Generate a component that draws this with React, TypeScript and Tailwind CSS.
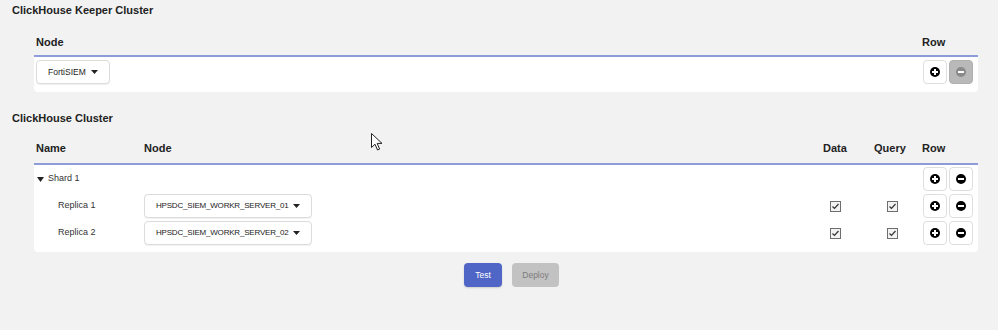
import React from "react";

const PlusIcon = ({ color = "#000" }: { color?: string }) => (
  <svg width="10" height="10" viewBox="0 0 10 10">
    <circle cx="5" cy="5" r="5" fill={color} />
    <rect x="4" y="2" width="2" height="6" fill="#fff" />
    <rect x="2" y="4" width="6" height="2" fill="#fff" />
  </svg>
);

const MinusIcon = ({ color = "#000" }: { color?: string }) => (
  <svg width="10" height="10" viewBox="0 0 10 10">
    <circle cx="5" cy="5" r="5" fill={color} />
    <rect x="2" y="4" width="6" height="2" fill="#fff" />
  </svg>
);

const Caret = () => (
  <svg width="7" height="4" viewBox="0 0 7 4">
    <path d="M0 0 L7 0 L3.5 4 Z" fill="#222" />
  </svg>
);

const Checkbox = () => (
  <div className="w-[11px] h-[11px] border border-[#6e6e6e] bg-[#f3f3f3] flex items-center justify-center">
    <svg width="9" height="9" viewBox="0 0 9 9">
      <path d="M1.5 4.5 L3.5 6.5 L7.5 2" stroke="#333" strokeWidth="1.2" fill="none" />
    </svg>
  </div>
);

const Dropdown = ({ label, w, text }: { label: string; w: string; text: string }) => (
  <div
    className={`${w} h-[24px] bg-white border border-[#dcdcdc] rounded-[4px] shadow-[0_1px_1px_rgba(0,0,0,0.06)] flex items-center justify-between pl-[11px] pr-[11px] text-[#222]`}
  >
    <span className={text}>{label}</span>
    <Caret />
  </div>
);

const RowButtons = ({ minusDisabled = false }: { minusDisabled?: boolean }) => (
  <div className="flex gap-[2px]">
    <div className="w-[24px] h-[24px] bg-white border border-[#dedede] rounded-[4px] flex items-center justify-center">
      <PlusIcon />
    </div>
    {minusDisabled ? (
      <div className="w-[24px] h-[24px] bg-[#b9b9b9] border border-[#b0b0b0] rounded-[4px] flex items-center justify-center">
        <MinusIcon color="#8a8a8a" />
      </div>
    ) : (
      <div className="w-[24px] h-[24px] bg-white border border-[#dedede] rounded-[4px] flex items-center justify-center">
        <MinusIcon />
      </div>
    )}
  </div>
);

export default function App() {
  return (
    <div
      className="relative w-[998px] h-[330px] bg-[#f2f2f2] overflow-hidden text-[#222]"
      style={{ fontFamily: '"Liberation Sans", Arial, sans-serif' }}
    >
      <div className="pt-[3px] pl-[12px] text-[11px] leading-[14px] font-bold text-[#222]">
        ClickHouse Keeper Cluster
      </div>

      <div className="ml-[34px] mr-[20px]">
        <div className="mt-[18px] h-[14px] grid grid-cols-[1fr_56px] text-[11px] leading-[14px] font-bold">
          <div className="pl-[2px]">Node</div>
          <div>Row</div>
        </div>
        <div className="mt-[6px] h-[2px] bg-[#8e9bd9]" />
        <div className="bg-white rounded-b-[4px] pt-[3px] pb-[8px] grid grid-cols-[1fr_56px] items-center">
          <div className="pl-[2px]">
            <Dropdown label="FortiSIEM" w="w-[74px]" text="text-[8.5px]" />
          </div>
          <div className="pl-[1px]">
            <RowButtons minusDisabled />
          </div>
        </div>
      </div>

      <div className="mt-[19px] pl-[12px] text-[11px] leading-[14px] font-bold text-[#222]">
        ClickHouse Cluster
      </div>

      <div className="ml-[34px] mr-[20px]">
        <div className="mt-[16px] h-[14px] grid grid-cols-[110px_679px_51px_48px_56px] text-[11px] leading-[14px] font-bold">
          <div className="pl-[2px]">Name</div>
          <div>Node</div>
          <div>Data</div>
          <div>Query</div>
          <div>Row</div>
        </div>
        <div className="mt-[8px] h-[2px] bg-[#8e9bd9]" />
        <div className="bg-white rounded-b-[4px] pt-[2px] pb-[7px] flex flex-col gap-[3px] text-[9px] text-[#333]">
          <div className="grid grid-cols-[110px_679px_51px_48px_56px] items-center h-[24px]">
            <div className="pl-[3px] flex items-center gap-[4px]">
              <svg width="7" height="5" viewBox="0 0 7 5">
                <path d="M0 0 L7 0 L3.5 5 Z" fill="#222" />
              </svg>
              <span>Shard 1</span>
            </div>
            <div />
            <div />
            <div />
            <div className="pl-[1px]">
              <RowButtons />
            </div>
          </div>
          {["01", "02"].map((n, i) => (
            <div key={n} className="grid grid-cols-[110px_679px_51px_48px_56px] items-center h-[24px]">
              <div className="pl-[24px]">Replica {i + 1}</div>
              <div>
                <Dropdown
                  label={`HPSDC_SIEM_WORKR_SERVER_${n}`}
                  w="w-[168px]"
                  text="text-[8px] tracking-[-0.2px]"
                />
              </div>
              <div className="pl-[7px]">
                <Checkbox />
              </div>
              <div className="pl-[13px]">
                <Checkbox />
              </div>
              <div className="pl-[1px]">
                <RowButtons />
              </div>
            </div>
          ))}
        </div>

        <div className="mt-[11px] flex gap-[10px] pl-[430px]">
          <div className="w-[38px] h-[24px] rounded-[4px] bg-[#4f66c6] text-white text-[8.5px] flex items-center justify-center shadow-[0_1px_2px_rgba(0,0,0,0.15)]">
            Test
          </div>
          <div className="w-[47px] h-[24px] rounded-[4px] bg-[#c2c2c2] text-[#7c7c7c] text-[8.5px] flex items-center justify-center">
            Deploy
          </div>
        </div>
      </div>

      <svg className="absolute left-[371px] top-[133px]" width="13" height="19" viewBox="0 0 13 19">
        <path
          d="M0.5 0.5 L0.5 14.5 L4 11.2 L6.5 17 L8.6 16.1 L6.2 10.4 L11 10.4 Z"
          fill="#fff"
          stroke="#222"
          strokeWidth="1"
          strokeLinejoin="round"
        />
      </svg>
    </div>
  );
}
